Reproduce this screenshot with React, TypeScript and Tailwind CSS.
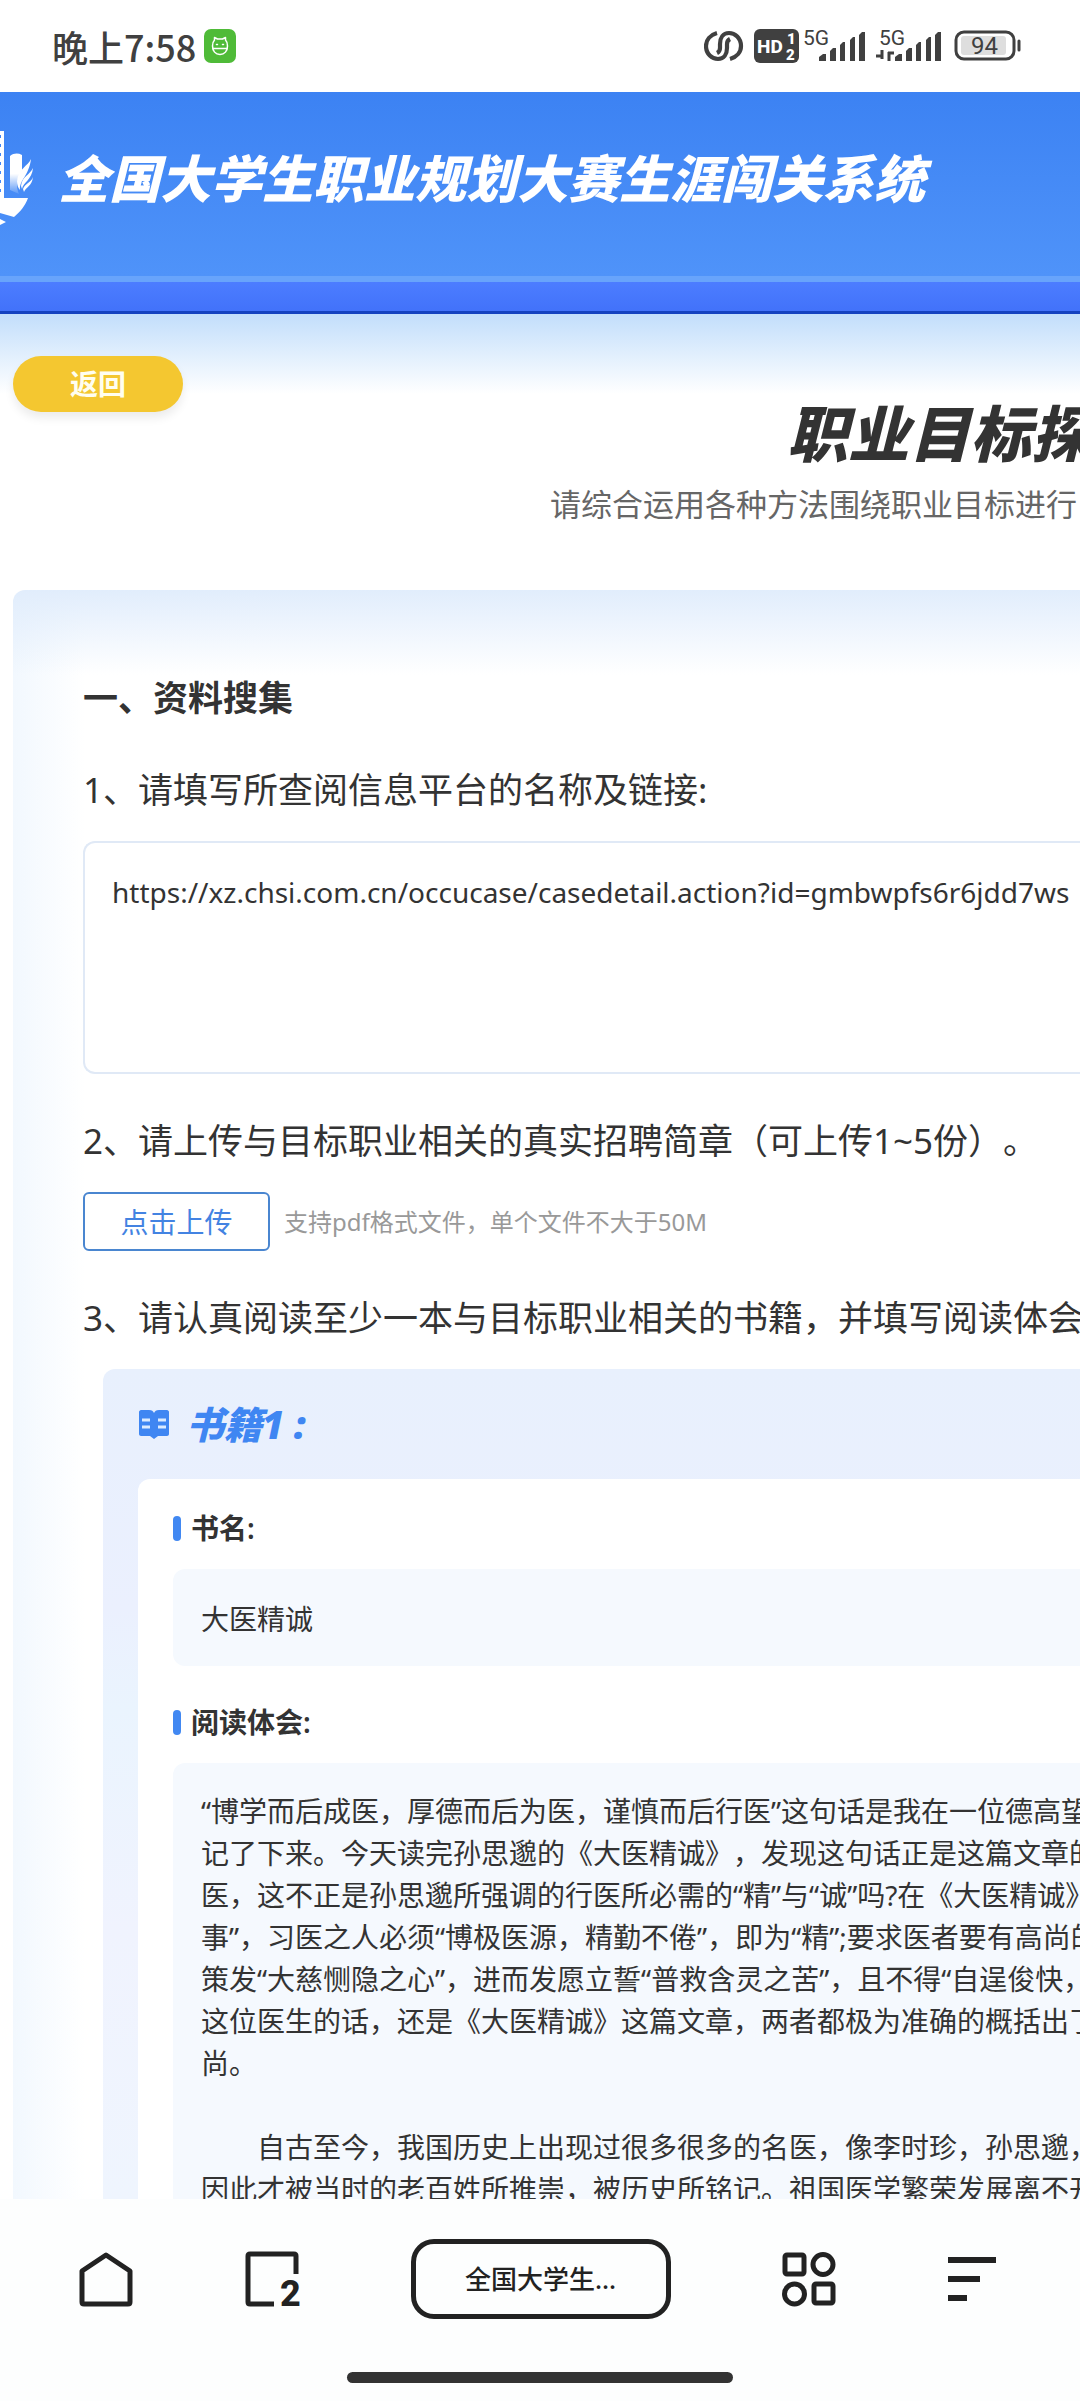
import * as React from "react";
import { useState } from "react";

const INFO_URL =
  "https://xz.chsi.com.cn/occucase/casedetail.action?id=gmbwpfs6r6jdd7ws";

const READING = [
  "“博学而后成医，厚德而后为医，谨慎而后行医”这句话是我在一位德高望",
  "记了下来。今天读完孙思邈的《大医精诚》，发现这句话正是这篇文章的",
  "医，这不正是孙思邈所强调的行医所必需的“精”与“诚”吗?在《大医精诚》",
  "事”，习医之人必须“博极医源，精勤不倦”，即为“精”;要求医者要有高尚的",
  "策发“大慈恻隐之心”，进而发愿立誓“普救含灵之苦”，且不得“自逞俊快，",
  "这位医生的话，还是《大医精诚》这篇文章，两者都极为准确的概括出了",
  "尚。",
  "",
  "　　自古至今，我国历史上出现过很多很多的名医，像李时珍，孙思邈，",
  "因此才被当时的老百姓所推崇，被历史所铭记。祖国医学繁荣发展离不开",
].join("\n");

const SignalBars = () => (
  <g fill="#404040">
    <path d="M0 29v-4l4-3h3v7z" />
    <path d="M11 29V19l3-3h3v13z" />
    <path d="M21 29V13l3-3h2v19z" />
    <path d="M31 29V8l3-3h2v24z" />
    <path d="M40 29V3l3-3h3v29z" />
  </g>
);

const StatusBar = () => (
  <div className="flex h-[92px] shrink-0 items-center justify-between bg-white pl-[52px] pr-[58px] text-[#404040]">
    <div className="flex items-center gap-2">
      <span className="font-['Noto_Sans_CJK_SC',sans-serif] text-[36px] font-medium leading-[44px]">
        晚上7:58
      </span>
      <svg width="32" height="34" viewBox="0 0 32 34" fill="none">
        <rect width="32" height="34" rx="7" fill="#4fbb38" />
        <g stroke="#fff" strokeWidth="1.5" strokeLinejoin="round" strokeLinecap="round">
          <path d="M8.500 17c0-3 1-5 2-6V8.500l3 1.500h5l3-1.500V11c1 1 2 3 2 6 0 5-3 8.500-7.500 8.500S8.500 22 8.500 17z" />
          <path d="M9 19.500h14M12.500 15.500h1M18.500 15.500h1" />
        </g>
      </svg>
    </div>

    <div className="flex items-center">
      <svg width="318" height="48" viewBox="0 -6 318 48" fill="none">
        {/* link rings */}
        <g stroke="#404040" strokeWidth="4.200">
          <path d="M13 5C6 7 2 12 2 18c0 8 6 13 12 13s9-5 9-11v-4c0-2 1-4 3-5" />
          <path d="M26 31c7-2 11-7 11-13 0-8-6-13-12-13s-9 5-9 11v4c0 2-1 4-3 5" />
        </g>
        <rect x="50" y="1" width="45" height="34" rx="6" fill="#404040" />
        <text x="53" y="25" fill="#fff" fontFamily="Roboto, sans-serif" fontSize="19" fontWeight="800">
          HD
        </text>
        <text x="83" y="16" fill="#fff" fontFamily="Roboto, sans-serif" fontSize="15" fontWeight="900">
          1
        </text>
        <text x="82" y="32" fill="#fff" fontFamily="Roboto, sans-serif" fontSize="15" fontWeight="900">
          2
        </text>
        <text x="99" y="17" fill="#404040" fontFamily="Roboto, sans-serif" fontSize="21">
          5G
        </text>
        <g transform="translate(115 4)">
          <SignalBars />
        </g>
        <text x="175" y="17" fill="#404040" fontFamily="Roboto, sans-serif" fontSize="21">
          5G
        </text>
        <path d="M178 22v9M172 28h7M185 33v-9M184 25h6" stroke="#404040" strokeWidth="3" />
        <g transform="translate(191 4)">
          <SignalBars />
        </g>
        <rect x="252" y="4" width="58" height="27" rx="8" stroke="#404040" strokeWidth="3" />
        <rect x="257" y="8" width="45" height="19" rx="3" fill="#dedede" />
        <path d="M315 13v9" stroke="#404040" strokeWidth="3" strokeLinecap="round" />
        <text x="267" y="26" fill="#404040" fontFamily="Roboto, sans-serif" fontSize="24">
          94
        </text>
      </svg>
    </div>
  </div>
);

const Logo = () => (
  <svg width="34" height="94" viewBox="0 0 34 94" fill="#fff">
    <defs>
      <linearGradient id="wing" x1="0" y1="0" x2="0" y2="1">
        <stop offset="0" stopColor="#fff" />
        <stop offset=".5" stopColor="#fff" />
        <stop offset="1" stopColor="#fff" stopOpacity=".1" />
      </linearGradient>
    </defs>
    <path d="M0 0h4v67H0v-6h1v-3H0v-6h1v-3H0v-6h1v-3H0v-6h1v-3H0v-6h1v-3H0v-6h1v-3H0v-6h1v-3H0z" />
    <path d="M10 25c4-3 8-3 12-1v17c-6 7-6 15-3 22l-9-4z" fill="url(#wing)" />
    <path d="M31 28c-3 7-13 10-14 22 0 4 1 7 3 9-1-10 9-14 11-31z" />
    <path d="M33 37c-3 7-11 8-12 18l1 3c1-7 10-9 11-21z" />
    <path d="M33 46c-2 6-8 6-10 12l1 3c2-5 8-6 9-15z" />
    <path d="M0 67h28c-3 8-8 14-14 19L0 82zM0 88l6 3-6 3z" />
  </svg>
);

const BookIcon = () => (
  <svg width="32" height="30" viewBox="0 0 32 30">
    <path
      d="M3 1h8c3 0 4 1 5 3 1-2 2-3 5-3h8c1 0 2 1 2 2v22c0 1-1 2-2 2h-9l-4 3-4-3H3c-1 0-2-1-2-2V3c0-1 1-2 2-2z"
      fill="#3f86f2"
    />
    <path d="M4 11h8M4 18h8M20 11h8M20 18h8" stroke="#dcebff" strokeWidth="3" />
  </svg>
);

const FieldLabel = ({ htmlFor, children }: { htmlFor: string; children: React.ReactNode }) => (
  <label
    htmlFor={htmlFor}
    className="flex items-center gap-[10px] text-[28px] font-semibold leading-[42px]"
  >
    <span className="h-[25px] w-2 rounded-full bg-[#4188f2]" />
    {children}
  </label>
);

const BottomNav = () => (
  <footer className="shrink-0 bg-[#fdfefe] pb-[18px] pt-10">
    <nav className="flex h-20 items-center justify-between pl-[79px] pr-[84px]">
      <button type="button" aria-label="主页">
        <svg width="54" height="56" viewBox="0 0 54 56" fill="none">
          <path
            d="M3 20 27 4l24 16v31q0 2-2 2H5q-2 0-2-2z"
            stroke="#222"
            strokeWidth="5"
            strokeLinejoin="round"
          />
        </svg>
      </button>
      <button type="button" aria-label="标签页">
        <svg className="overflow-visible" width="54" height="56" viewBox="0 0 54 56" fill="none">
          <path d="M51 23V5q0-2-2-2H5q-2 0-2 2v46q0 2 2 2h24" stroke="#222" strokeWidth="5" />
          <text x="35" y="55" fill="#222" fontFamily="Roboto, sans-serif" fontSize="36" fontWeight="800">
            2
          </text>
        </svg>
      </button>
      <button
        type="button"
        className="h-20 w-[260px] rounded-[23px] border-[5px] border-[#222] text-[26px] font-medium leading-10 text-[#222]"
      >
        全国大学生...
      </button>
      <button type="button" aria-label="应用">
        <svg width="54" height="56" viewBox="0 0 54 56" fill="none" stroke="#222" strokeWidth="5">
          <rect x="3" y="4" width="19" height="19" rx="2" />
          <circle cx="41" cy="13.500" r="10" />
          <circle cx="12.500" cy="43" r="10" />
          <rect x="32" y="33" width="19" height="19" rx="2" />
        </svg>
      </button>
      <button type="button" aria-label="菜单">
        <svg width="48" height="44" viewBox="0 0 48 44" fill="#222">
          <path d="M0 0h48v6H0zM0 19h32v6H0zM0 38h19v6H0z" />
        </svg>
      </button>
    </nav>
    <div className="mx-auto mt-[53px] h-[11px] w-[386px] rounded-full bg-[#333]" />
  </footer>
);

const App = () => {
  const [url, setUrl] = useState(INFO_URL);
  const [bookName, setBookName] = useState("大医精诚");
  const [reading, setReading] = useState(READING);

  return (
    <div className="flex h-screen flex-col overflow-hidden bg-white font-['Noto_Sans','Noto_Sans_CJK_SC',sans-serif] text-[#333] [text-spacing-trim:space-all]">
      <StatusBar />

      <header className="shrink-0">
        <div className="flex h-[184px] items-center gap-6 bg-linear-to-b from-[#3c82f3] to-[#4f93f9] pb-3">
          <Logo />
          <h1 className="whitespace-nowrap text-[51px] font-black italic leading-[60px] text-white">
            全国大学生职业规划大赛生涯闯关系统
          </h1>
        </div>
        <div className="h-[38px] border-b-[3px] border-t-[6px] border-b-[#1442c0] border-t-[#68a4fb] bg-linear-to-b from-[#4c7dff] to-[#4272fa]" />
      </header>

      <main className="min-h-0 flex-1 overflow-hidden bg-[linear-gradient(to_bottom,#c2defb_0px,#ffffff_80px)] pl-[13px] pt-[42px]">
        <button
          type="button"
          className="block h-14 w-[170px] rounded-full bg-[#f4c730] text-[28px] font-bold text-[#fffef0] shadow-[0_6px_10px_rgba(0,0,0,0.08)]"
        >
          返回
        </button>
        <div className="whitespace-nowrap">
          <h2 className="pl-[774px] text-[61px] font-black italic leading-[44px]">
            职业目标探
          </h2>
          <p className="mt-7 pl-[537px] text-[31px] leading-10 text-[#666]">
            请综合运用各种方法围绕职业目标进行
          </p>
        </div>

        <section className="mt-[66px] rounded-tl-xl bg-[linear-gradient(to_bottom,#e1edfc_0px,#ffffff00_85px),linear-gradient(to_right,#f2f8fe_0px,#ffffff_72px)] pl-[70px] pt-[83px]">
          <h3 className="text-[35px] font-semibold leading-[50px]">一、资料搜集</h3>

          <div className="mt-[42px]">
            <label htmlFor="info-url" className="block whitespace-nowrap text-[35px] leading-[50px]">
              1、请填写所查阅信息平台的名称及链接:
            </label>
            <textarea
              id="info-url"
              className="mt-[26px] block h-[233px] w-full resize-none overflow-hidden rounded-l-xl border-2 border-r-0 border-[#e0e9f6] bg-transparent py-[28px] pl-[27px] text-[28px] leading-[42px] outline-none"
              wrap="off"
              value={url}
              onChange={(e) => setUrl(e.target.value)}
            />
          </div>

          <div className="mt-[42px]">
            <p className="whitespace-nowrap text-[35px] leading-[50px]">
              2、请上传与目标职业相关的真实招聘简章（可上传1~5份）。
            </p>
            <div className="mt-[26px] flex items-center gap-[14px]">
              <button
                type="button"
                className="h-[59px] w-[187px] rounded-md border-2 border-[#4a86d0] text-[28px] text-[#4383e2]"
              >
                点击上传
              </button>
              <span className="text-[24px] leading-9 text-[#999]">
                支持pdf格式文件，单个文件不大于50M
              </span>
            </div>
          </div>

          <div className="mt-[42px]">
            <p className="whitespace-nowrap text-[35px] leading-[50px]">
              3、请认真阅读至少一本与目标职业相关的书籍，并填写阅读体会
            </p>
            <div className="ml-5 mt-[26px] rounded-tl-xl bg-[linear-gradient(to_bottom,#e8f0fd_0px,#ebf0fe_240px,#eaf4fe_340px,#f0f3fe_560px,#eff5fe_830px)] pl-[35px]">
              <div className="flex h-[110px] items-center gap-4 text-[#3f86f2]">
                <BookIcon />
                <h4 className="text-[38px] font-black italic leading-[50px]">书籍1 :</h4>
              </div>
              <div className="rounded-tl-xl bg-white pl-[35px] pt-7">
                <FieldLabel htmlFor="book-name">书名:</FieldLabel>
                <input
                  id="book-name"
                  type="text"
                  className="mt-5 block h-[97px] w-full rounded-l-xl bg-[#f5f9fe] pl-7 text-[28px] outline-none"
                  value={bookName}
                  onChange={(e) => setBookName(e.target.value)}
                />
                <div className="mt-[35px]">
                  <FieldLabel htmlFor="reading">阅读体会:</FieldLabel>
                </div>
                <textarea
                  id="reading"
                  rows={11}
                  wrap="off"
                  className="mt-5 block w-full resize-none overflow-hidden rounded-tl-xl bg-[#f5f9fe] pl-7 pt-[27px] text-[28px] leading-[42px] outline-none"
                  value={reading}
                  onChange={(e) => setReading(e.target.value)}
                />
              </div>
            </div>
          </div>
        </section>
      </main>

      <BottomNav />
    </div>
  );
};

export default App;
